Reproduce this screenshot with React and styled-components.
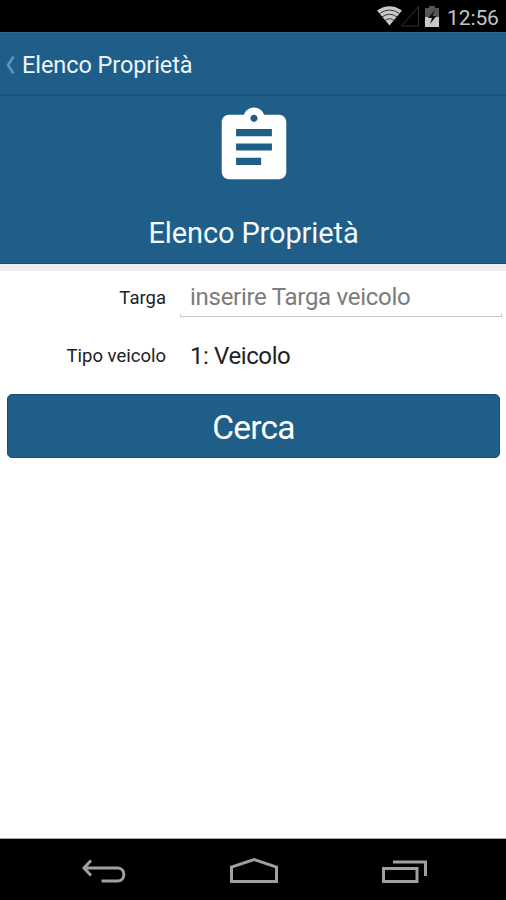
import styled, { createGlobalStyle } from "styled-components";
import { MdAssignment } from "react-icons/md";

const GlobalStyle = createGlobalStyle`
  * {
    box-sizing: border-box;
  }

  body {
    margin: 0;
    background: #fff;
    font-family: Roboto, "Liberation Sans", sans-serif;
  }
`;

const Screen = styled.div`
  display: flex;
  flex-direction: column;
  width: 506px;
  height: 900px;
  overflow: hidden;
  background: #fff;
`;

const StatusBar = styled.div`
  display: flex;
  flex: none;
  justify-content: flex-end;
  height: 32px;
  padding-right: 8px;
  background: #000;
`;

const StatusIcons = styled.svg`
  display: block;
  width: 66px;
  height: 32px;
  margin-right: 6px;
`;

const Clock = styled.span`
  width: 51px;
  color: #c4c4c4;
  font-size: 21px;
  line-height: 36px;
  letter-spacing: -0.1px;
  white-space: nowrap;
`;

const ActionBar = styled.header`
  display: flex;
  flex: none;
  align-items: center;
  height: 64px;
  padding: 2px 0 0 6px;
  border-top: 1px solid #2a6890;
  border-bottom: 2px solid #1a547c;
  background: #1f5e88;
`;

const BackChevron = styled.svg`
  width: 9px;
  height: 20px;
  margin-right: 7px;
`;

const BarTitle = styled.h1`
  margin: 0;
  color: #edf4fa;
  font-size: 23.5px;
  font-weight: 400;
  line-height: 30px;
  letter-spacing: -0.08px;
  white-space: nowrap;
`;

const Hero = styled.section`
  display: flex;
  flex: none;
  flex-direction: column;
  align-items: center;
  height: 168px;
  padding: 8px 0 0 1px;
  border-bottom: 1px solid #134c75;
  background: #1f5e88;
  color: #fff;
`;

const HeroTitle = styled.h2`
  margin: 25px 0 0;
  font-size: 29px;
  font-weight: 400;
  line-height: 36px;
  letter-spacing: -0.12px;
  color: #f4f9fd;
  white-space: nowrap;
`;

const Strip = styled.div`
  flex: none;
  height: 7px;
  background: #eee;
`;

const Form = styled.form`
  display: flex;
  flex: 1;
  flex-direction: column;
`;

const Row = styled.div`
  display: grid;
  grid-template-columns: 166px 322px;
  column-gap: 14px;
  height: ${(props) => props.$height};
`;

const Label = styled.label`
  color: #222;
  font-size: 18.5px;
  line-height: 54px;
  text-align: right;
  white-space: nowrap;
`;

const Field = styled.div`
  position: relative;
  height: 46px;
  padding-left: 10px;
  border-bottom: 1px solid #c6c6c6;
  color: #7c7c7c;
  font-size: 24px;
  line-height: 53px;
  letter-spacing: -0.28px;
  white-space: nowrap;

  &::before,
  &::after {
    content: "";
    position: absolute;
    bottom: 0;
    left: 0;
    width: 1px;
    height: 3px;
    background: #d0d0d0;
  }

  &::after {
    right: 0;
    left: auto;
  }
`;

const Value = styled.div`
  padding-left: 10px;
  color: #222;
  font-size: 24px;
  line-height: 54px;
  letter-spacing: -0.4px;
  white-space: nowrap;
`;

const SearchButton = styled.button`
  height: 64px;
  margin: 0 6px 0 7px;
  padding: 3px 0 0;
  border: 1px solid #15507b;
  border-radius: 5px;
  background: #1f5e88;
  color: #fff;
  font-family: inherit;
  font-size: 33.5px;
  line-height: 40px;
  letter-spacing: -0.8px;
`;

const NavBar = styled.nav`
  display: flex;
  flex: none;
  justify-content: center;
  height: 62px;
  padding-left: 2px;
  border-top: 1px solid #aaa;
  background: #000;
`;

const NavIcon = styled.svg`
  display: block;
  width: 151px;
  height: 61px;
  fill: none;
  stroke: #a0a0a0;
  stroke-width: 3;
`;

function StatusGlyphs() {
  return (
    <StatusIcons viewBox="375 0 66 32">
      {/* wifi */}
      <path d="M377 10.5Q389.5 2 402 10.5L389.5 25.5Z" fill="#c8c8c8" />
      <g fill="none" stroke="#333" strokeWidth="1">
        <path d="M379.5 13.5Q389.5 6.5 399.5 13.5" />
        <path d="M382 17Q389.5 11.5 397 17" />
        <path d="M385 20.5Q389.5 17 394 20.5" />
      </g>
      {/* no signal */}
      <path d="M418.5 6.5V26H401.5Z" fill="none" stroke="#333" />
      {/* charging battery */}
      <path d="M429 6h6v2h4v9h-14V8h4Z" fill="#555" />
      <path d="M425 17h14v10h-14Z" fill="#c8c8c8" />
      <path d="M435 10l-7 8h4l-2 6 6.5-8h-4Z" fill="#111" />
    </StatusIcons>
  );
}

export default function App() {
  return (
    <>
      <GlobalStyle />
      <Screen>
        <StatusBar>
          <StatusGlyphs />
          <Clock>12:56</Clock>
        </StatusBar>
        <ActionBar>
          <BackChevron viewBox="0 0 9 20">
            <path
              d="M7.5 1.5L2 10L7.5 18.5"
              fill="none"
              stroke="#6394b3"
              strokeWidth="2.6"
            />
          </BackChevron>
          <BarTitle>Elenco Proprietà</BarTitle>
        </ActionBar>
        <Hero>
          <MdAssignment size={86} />
          <HeroTitle>Elenco Proprietà</HeroTitle>
        </Hero>
        <Strip />
        <Form onSubmit={(e) => e.preventDefault()}>
          <Row $height="58px">
            <Label>Targa</Label>
            <Field>inserire Targa veicolo</Field>
          </Row>
          <Row $height="65px">
            <Label>Tipo veicolo</Label>
            <Value>1: Veicolo</Value>
          </Row>
          <SearchButton>Cerca</SearchButton>
        </Form>
        <NavBar>
          <NavIcon viewBox="28 839 151 61">
            <path d="M91 860.5L84 868L91 875.5M84.5 868H117.500C126 868 126 881 117.500 881H101.500" />
          </NavIcon>
          <NavIcon viewBox="179 839 151 61">
            <path d="M231.500 881.500V867L254 859.500L276.500 867V881.500Z" />
          </NavIcon>
          <NavIcon viewBox="330 839 151 61">
            <path d="M383.500 868.500H417V881.500H383.500ZM393 862H425.500V876" />
          </NavIcon>
        </NavBar>
      </Screen>
    </>
  );
}
